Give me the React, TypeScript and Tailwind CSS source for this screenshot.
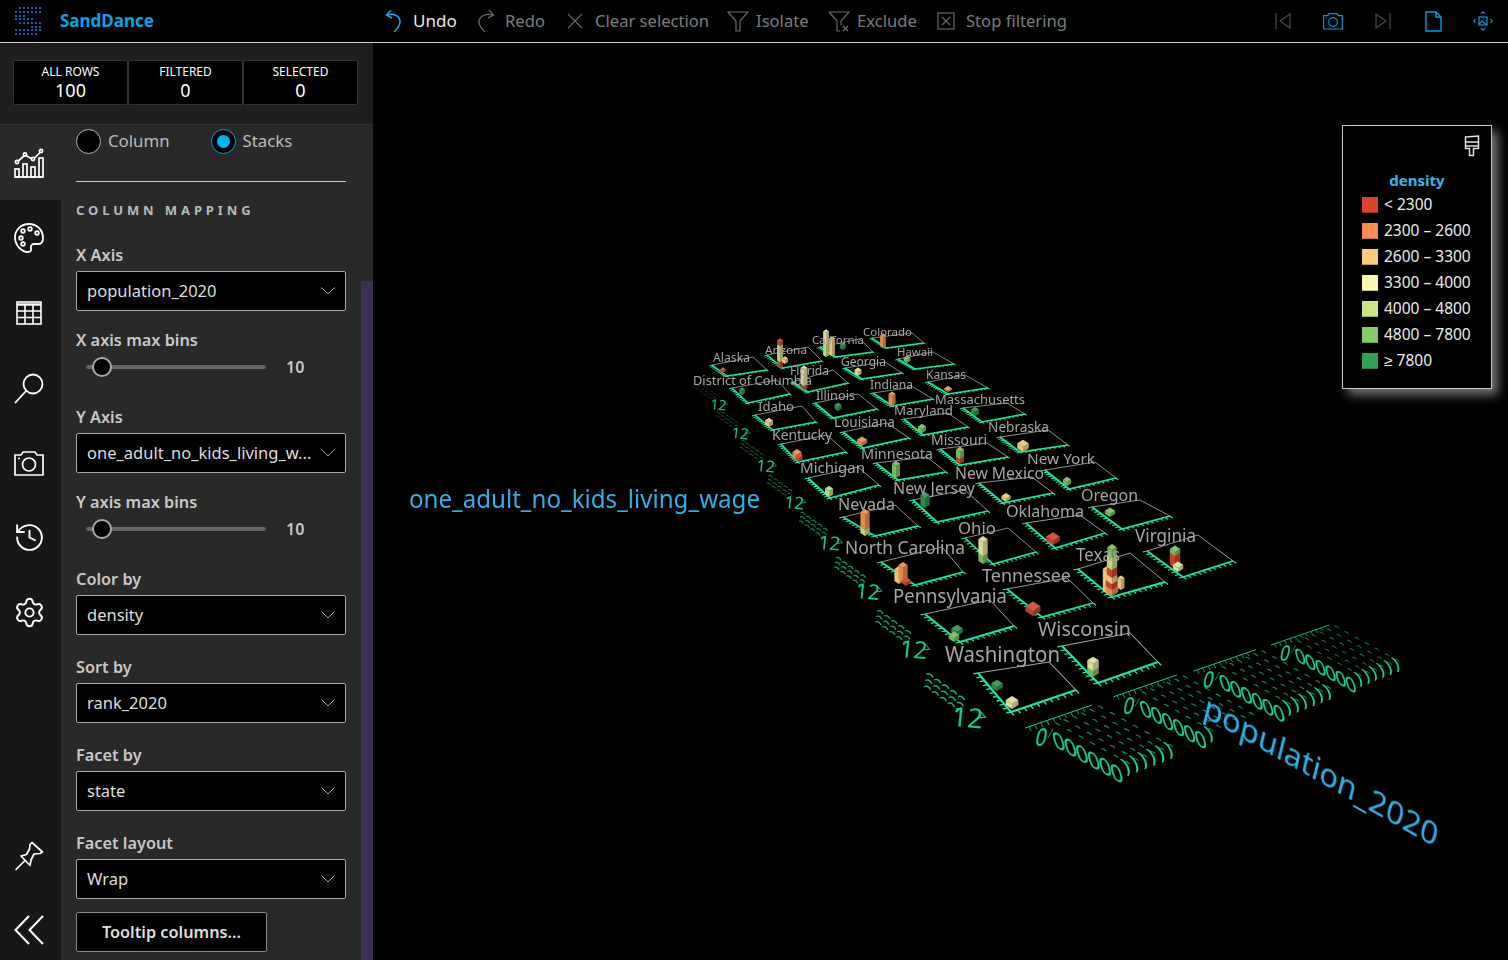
import { History, Settings } from "lucide-react";
import type { ReactNode } from "react";

type Pt = [number, number];

const red = "#c8402f";
const orange = "#e58a4e";
const tan = "#e6c47e";
const pale = "#ded99a";
const lime = "#bcd67e";
const green = "#79b85c";
const dark = "#2e8b4a";

// corners of each facet floor: left, front, right, top
const facets: [Pt, Pt, Pt, Pt][] = [
  [[712, 365], [727, 376], [767, 370], [753, 357]],
  [[767, 355], [783, 368], [822, 361], [808, 347]],
  [[820, 347], [836, 357], [873, 352], [860, 339]],
  [[872, 338], [887, 348], [924, 343], [912, 333]],
  [[732, 388], [748, 403], [790, 394], [777, 380]],
  [[793, 382], [808, 392], [848, 383], [833, 370]],
  [[845, 368], [862, 379], [902, 373], [885, 362]],
  [[898, 359], [915, 369], [954, 364], [933, 352]],
  [[755, 415], [773, 430], [816, 422], [802, 406]],
  [[815, 403], [833, 418], [877, 409], [858, 394]],
  [[873, 393], [892, 406], [933, 399], [913, 387]],
  [[928, 382], [948, 394], [988, 388], [965, 375]],
  [[781, 444], [798, 462], [846, 452], [827, 435]],
  [[843, 432], [863, 448], [909, 438], [887, 423]],
  [[904, 419], [923, 435], [968, 427], [948, 413]],
  [[963, 408], [982, 422], [1025, 414], [1007, 403]],
  [[808, 478], [830, 498], [879, 485], [858, 467]],
  [[876, 463], [898, 480], [946, 472], [927, 457]],
  [[940, 449], [960, 465], [1008, 457], [987, 443]],
  [[1000, 437], [1020, 452], [1068, 445], [1048, 430]],
  [[843, 517], [875, 536], [918, 526], [895, 505]],
  [[913, 500], [937, 522], [988, 511], [965, 490]],
  [[979, 483], [1003, 503], [1053, 493], [1032, 477]],
  [[1045, 470], [1069, 489], [1116, 478], [1095, 462]],
  [[881, 562], [915, 585], [963, 572], [942, 547]],
  [[965, 538], [993, 564], [1036, 552], [1008, 528]],
  [[1026, 523], [1055, 548], [1105, 533], [1080, 515]],
  [[1092, 507], [1122, 529], [1170, 516], [1140, 500]],
  [[925, 614], [960, 642], [1014, 626], [990, 600]],
  [[1007, 589], [1042, 617], [1093, 603], [1067, 578]],
  [[1078, 569], [1112, 597], [1165, 582], [1130, 553]],
  [[1147, 551], [1183, 577], [1233, 561], [1198, 535]],
  [[978, 673], [1011, 712], [1076, 690], [1049, 662]],
  [[1062, 646], [1098, 683], [1158, 662], [1130, 633]],
];

// text, left x, baseline y, width
const labels: [string, number, number, number][] = [
  ["Alaska", 713, 362, 37],
  ["Arizona", 765, 354, 42],
  ["California", 812, 344, 52],
  ["Colorado", 863, 336, 49],
  ["District of Columbia", 693, 385, 119],
  ["Florida", 790, 375, 39],
  ["Georgia", 841, 366, 45],
  ["Hawaii", 897, 356, 36],
  ["Idaho", 758, 411, 36],
  ["Illinois", 816, 400, 39],
  ["Indiana", 870, 389, 43],
  ["Kansas", 926, 379, 40],
  ["Kentucky", 772, 440, 60],
  ["Louisiana", 834, 427, 61],
  ["Maryland", 894, 415, 59],
  ["Massachusetts", 935, 404, 90],
  ["Michigan", 800, 473, 65],
  ["Minnesota", 861, 459, 72],
  ["Missouri", 931, 445, 56],
  ["Nebraska", 988, 432, 61],
  ["Nevada", 838, 510, 57],
  ["New Jersey", 893, 494, 82],
  ["New Mexico", 955, 479, 89],
  ["New York", 1027, 464, 68],
  ["North Carolina", 845, 554, 120],
  ["Ohio", 958, 534, 38],
  ["Oklahoma", 1006, 517, 78],
  ["Oregon", 1081, 501, 57],
  ["Pennsylvania", 893, 603, 114],
  ["Tennessee", 982, 582, 89],
  ["Texas", 1076, 561, 44],
  ["Virginia", 1135, 542, 61],
  ["Washington", 945, 662, 115],
  ["Wisconsin", 1038, 636, 93],
];

// center x, bottom y, width, height, colour; drawn in order
const bars: [number, number, number, number, string][] = [
  [723, 373, 5, 2, red],
  [780, 368, 5, 6, red],
  [780, 362, 5, 16, lime],
  [780, 346, 5, 4, red],
  [785, 364, 5, 4, tan],
  [826, 357, 5, 12, lime],
  [826, 345, 5, 12, pale],
  [832, 356, 5, 16, tan],
  [843, 350, 5, 4, dark],
  [883, 348, 5, 4, orange],
  [883, 344, 5, 7, orange],
  [742, 395, 5, 4, dark],
  [804, 390, 6, 4, red],
  [804, 386, 6, 16, pale],
  [858, 376, 6, 4, pale],
  [907, 363, 6, 3, green],
  [769, 427, 7, 4, tan],
  [838, 411, 6, 4, dark],
  [892, 406, 6, 10, orange],
  [948, 392, 7, 1, orange],
  [797, 460, 8, 5, orange],
  [799, 462, 6, 4, red],
  [862, 446, 9, 3, orange],
  [922, 433, 7, 4, green],
  [975, 416, 7, 4, dark],
  [829, 497, 7, 6, lime],
  [896, 478, 7, 12, green],
  [960, 464, 7, 5, red],
  [960, 459, 7, 7, green],
  [1023, 452, 10, 5, tan],
  [925, 508, 8, 10, dark],
  [1006, 502, 8, 3, tan],
  [1067, 486, 7, 4, green],
  [865, 536, 8, 6, lime],
  [865, 530, 8, 15, orange],
  [899, 584, 8, 12, tan],
  [903, 582, 8, 14, orange],
  [906, 586, 8, 3, red],
  [983, 564, 8, 8, green],
  [983, 556, 8, 14, pale],
  [1053, 545, 12, 4, red],
  [1110, 517, 9, 3, green],
  [957, 636, 10, 4, dark],
  [954, 642, 9, 4, green],
  [1033, 616, 13, 5, red],
  [1108, 594, 9, 22, tan],
  [1112, 596, 11, 6, orange],
  [1112, 590, 11, 6, red],
  [1112, 584, 9, 6, tan],
  [1112, 578, 9, 8, red],
  [1112, 570, 9, 12, lime],
  [1112, 558, 8, 8, green],
  [1121, 590, 6, 10, tan],
  [1175, 568, 9, 12, red],
  [1175, 556, 9, 4, green],
  [1178, 572, 9, 4, pale],
  [997, 691, 10, 4, dark],
  [1012, 709, 11, 5, pale],
  [1093, 677, 10, 6, green],
  [1093, 671, 10, 7, pale],
];

const twelves: [number, number, number][] = [
  [710, 409, 14],
  [731, 438, 15],
  [756, 471, 16],
  [784, 508, 17],
  [818, 549, 19],
  [855, 598, 21],
  [899, 657, 24],
  [951, 726, 27],
];

const zeroGroups: [number, number, number, number][] = [
  [0, 0, 1, 6],
  [88, -32, 0.95, 1],
  [168, -58, 0.93, 6],
  [245, -85, 0.87, 6],
];

const legend: [string, string, string][] = [
  ["#d9432f", "#a83325", "< 2300"],
  ["#f88c52", "#bf6b3e", "2300 – 2600"],
  ["#fdcb7c", "#c09a5d", "2600 – 3300"],
  ["#f9f6ad", "#c5c388", "3300 – 4000"],
  ["#cce681", "#9fb465", "4000 – 4800"],
  ["#85cb66", "#67a04f", "4800 – 7800"],
  ["#2fa352", "#247e3f", "≥ 7800"],
];

// logo dots: row y, then the x of each dot
const logoRows: [number, number[]][] = [
  [8, [20, 24, 28, 32, 36, 40]],
  [12, [16, 20, 24, 28, 32, 36, 40]],
  [16, [16, 20, 24]],
  [19, [16, 20, 24, 28, 32]],
  [23, [20, 24, 28, 32, 36, 40]],
  [27, [32, 36, 40]],
  [30, [16, 20, 24, 28, 32, 36, 40]],
  [34, [16, 20, 24, 28, 32, 36]],
];

function Prism({ b }: { b: (typeof bars)[number] }) {
  const [cx, by, w0, h, c] = b;
  const w = w0 * 1.15;
  const d = w * 0.32;
  const lx = cx - w / 2;
  const rx = cx + w / 2;
  return (
    <g>
      <polygon fill={c} points={`${lx},${by - d} ${cx},${by} ${cx},${by - h} ${lx},${by - h - d}`} />
      <polygon fill={c} points={`${rx},${by - d} ${cx},${by} ${cx},${by - h} ${rx},${by - h - d}`} />
      <polygon fill="#000" opacity="0.22" points={`${rx},${by - d} ${cx},${by} ${cx},${by - h} ${rx},${by - h - d}`} />
      <polygon fill={c} points={`${lx},${by - h - d} ${cx},${by - h} ${rx},${by - h - d} ${cx},${by - h - 2 * d}`} />
      <polygon fill="#fff" opacity="0.12" points={`${lx},${by - h - d} ${cx},${by - h} ${rx},${by - h - d} ${cx},${by - h - 2 * d}`} />
    </g>
  );
}

function Facet({ p }: { p: [Pt, Pt, Pt, Pt] }) {
  const [l, f, r, t] = p;
  const size = Math.hypot(r[0] - f[0], r[1] - f[1]);
  const sw = 0.7 + size / 48;
  const ticks: string[] = [];
  for (let i = 0; i <= 10; i++) {
    const k = i / 10;
    const ax = l[0] + (f[0] - l[0]) * k;
    const ay = l[1] + (f[1] - l[1]) * k;
    ticks.push(`M${ax} ${ay}l${(l[0] - r[0]) * 0.05} ${(l[1] - r[1]) * 0.02 + 1.2}`);
    const bx = f[0] + (r[0] - f[0]) * k;
    const by = f[1] + (r[1] - f[1]) * k;
    ticks.push(`M${bx} ${by}l${(f[0] - l[0]) * 0.09} ${(f[1] - l[1]) * 0.09}`);
  }
  return (
    <g fill="none">
      <path d={`M${l[0]} ${l[1]}L${t[0]} ${t[1]}L${r[0]} ${r[1]}`} stroke="#a8a8a8" strokeWidth={sw * 0.5} />
      <path d={`M${l[0]} ${l[1]}L${f[0]} ${f[1]}L${r[0]} ${r[1]}`} stroke="#18e8a0" strokeWidth={sw} />
      <path d={ticks.join("")} stroke="#18e8a0" strokeWidth={sw * 0.65} />
    </g>
  );
}

function LeftAxis({ item, index }: { item: (typeof twelves)[number]; index: number }) {
  const [x, y, s] = item;
  const arcs: string[] = [];
  const k = s / 24;
  for (let i = 0; i < 5; i++) {
    for (let j = 0; j < 3; j++) {
      const ax = x + (-22 - j + i * 7) * k;
      const ay = y + (-46 + j * 5.5 + i * 5) * k;
      arcs.push(`M${ax} ${ay}q${4 * k} ${-1.5 * k} ${6 * k} ${3 * k}`);
    }
  }
  return (
    <g>
      <path d={arcs.join("")} fill="none" stroke="#10c084" strokeWidth={0.6 + index * 0.12} opacity={0.45 + index * 0.07} />
      <text transform={`matrix(1,0.08,-0.1,1,${x},${y})`} fontSize={s} fill="#0fce8d" fontFamily="'Noto Sans', sans-serif">
        12
      </text>
      <path d={`M${x + s * 1.02} ${y - s * 0.62}l${s * 0.26} ${s * 0.3}l${-s * 0.26} ${s * 0.02}`} fill="none" stroke="#0fce8d" strokeWidth={0.4 + index * 0.1} />
    </g>
  );
}

function ZeroGroup({ g }: { g: (typeof zeroGroups)[number] }) {
  const [dx, dy, s, tail] = g;
  const font = "'Noto Sans', sans-serif";
  const dashes: string[] = [];
  for (let i = 0; i < 7; i++) {
    for (let j = 0; j < 6; j++) {
      const x = 23 + i * 11.6 + j * 8.6;
      const y = -21 + i * 6.4 - j * 3.4;
      dashes.push(`M${x} ${y}q3 0.2 5 2.6`);
    }
  }
  return (
    <g transform={`translate(${1032 + dx},${744 + dy}) scale(${s})`}>
      <path d="M-7 -16L60 -39" stroke="#14d898" strokeWidth="1" fill="none" />
      <path d="M-3 -17l2 4M3 -19l2 4M9 -21l2 4M15 -23l2 4M21 -25l2 3M27 -27l2 3M33 -29l2 3M39 -31l2 3M45 -33l2 3M51 -35l2 3" stroke="#14d898" strokeWidth="0.8" fill="none" />
      <path d={dashes.join("")} stroke="#0fb57e" strokeWidth="1.1" opacity="0.8" fill="none" />
      <path d="M16 -6L21 -15" stroke="#0fb57e" strokeWidth="0.8" fill="none" />
      <text transform="matrix(0.76,-0.05,-0.2,0.92,2,2)" fontSize="26" fill="#0fd08f" stroke="#0fd08f" strokeWidth="0.3" fontFamily={font}>
        0
      </text>
      {[0, 1, 2, 3, 4, 5].map((i) => (
        <text key={i} transform={`matrix(0.78,0.14,0.28,0.92,${23.6 + i * 11.6},${4.7 + i * 6.4})`} fontSize="26" fill="#0fd08f" stroke="#0fd08f" strokeWidth="0.3" fontFamily={font}>
          0
        </text>
      ))}
      {Array.from({ length: tail }, (_, i) => (
        <text key={i} transform={`matrix(0.95,-0.1,0.35,0.8,${93 + i * 8.6},${29 - i * 3.4})`} fontSize="24" fill="#0fd08f" fontFamily={font}>
          )
        </text>
      ))}
    </g>
  );
}

function Chart() {
  return (
    <svg viewBox="373 43 1135 917" className="block h-full w-full">
      <g className="blur-[0.25px]">
        {facets.map((p, i) => (
          <Facet key={i} p={p} />
        ))}
        {twelves.map((t, i) => (
          <LeftAxis key={i} item={t} index={i} />
        ))}
        {zeroGroups.map((g, i) => (
          <ZeroGroup key={i} g={g} />
        ))}
        {bars.map((b, i) => (
          <Prism key={i} b={b} />
        ))}
        {labels.map(([t, x, y, w]) => (
          <text
            key={t}
            x={x}
            y={y}
            textLength={w}
            lengthAdjust="spacingAndGlyphs"
            fontSize={11 + ((y - 336) / 326) * 10}
            fill="#a6a6a6"
            fontFamily="'Noto Sans', sans-serif"
          >
            {t}
          </text>
        ))}
      </g>
      <text x={409} y={508} textLength={351} lengthAdjust="spacingAndGlyphs" fontSize="25" fill="#2fb0e6" fontFamily="'Noto Sans', sans-serif">
        one_adult_no_kids_living_wage
      </text>
      <text transform="matrix(0.87,0.49,-0.24,0.97,1202,716)" textLength={268} lengthAdjust="spacingAndGlyphs" fontSize="31" fill="#2fb0e6" fontFamily="'Noto Sans', sans-serif">
        population_2020
      </text>
    </svg>
  );
}

function Logo() {
  return (
    <svg viewBox="14 5 30 32" className="h-8 w-[30px]">
      {logoRows.map(([y, xs]) =>
        xs.map((x) => <rect key={`${x}-${y}`} x={x - 1} y={y - 1} width="2" height="2" fill="#0a64b8" />),
      )}
    </svg>
  );
}

function ChartIcon() {
  return (
    <svg viewBox="0 0 30 30" className="h-[30px] w-[30px]" fill="none" stroke="#fff" strokeWidth="1.7">
      <path d="M1 29h28" />
      <rect x="1" y="21" width="4" height="8" />
      <rect x="9" y="16" width="4" height="13" />
      <rect x="17" y="19" width="4" height="10" />
      <rect x="25" y="10" width="4" height="19" />
      <path d="M3 14l8-7 8 4.500 8-8" />
      <circle cx="3" cy="14" r="1.600" fill="#292929" />
      <circle cx="11" cy="6.500" r="1.600" fill="#292929" />
      <circle cx="19" cy="11" r="1.600" fill="#292929" />
      <circle cx="27" cy="3" r="1.600" fill="#292929" />
    </svg>
  );
}

function PaletteIcon() {
  return (
    <svg viewBox="0 0 32 32" className="h-8 w-8" fill="none" stroke="#fff" strokeWidth="1.800">
      <path d="M16 2C8 2 2 8 2 15.500 2 23 8.500 30 15 30c2.500 0 3.500-1.500 3-3.500-.6-2.400.5-4.500 3-4.500h4.500c2.800 0 4.500-2.200 4.500-6C30 8 24 2 16 2z" />
      <circle cx="8" cy="16" r="1.800" />
      <circle cx="10" cy="9" r="1.800" />
      <circle cx="17" cy="7" r="1.800" />
      <circle cx="24" cy="11" r="1.800" />
      <circle cx="10" cy="22" r="1.800" />
    </svg>
  );
}

function TableIcon() {
  return (
    <svg viewBox="0 0 26 24" className="h-6 w-[26px]" fill="none" stroke="#fff" strokeWidth="1.6">
      <rect x="1" y="1" width="24" height="22" />
      <path d="M1 3.500h24" strokeWidth="2.400" />
      <path d="M1 10h24M1 16.500h24M9 3v20M17 3v20" />
    </svg>
  );
}

function SearchIcon() {
  return (
    <svg viewBox="0 0 32 32" className="h-8 w-8" fill="none" stroke="#fff" strokeWidth="1.800">
      <circle cx="20" cy="12" r="9.500" />
      <path d="M13 19L2 31" />
    </svg>
  );
}

function CameraIcon({ className, color }: { className: string; color: string }) {
  return (
    <svg viewBox="0 0 30 26" className={className} fill="none" stroke={color} strokeWidth="1.7">
      <path d="M1 5h6l2-3h12l2 3h6v20H1z" />
      <circle cx="15" cy="14.500" r="6.500" />
      <path d="M4 8.500h2" />
    </svg>
  );
}

function PinIcon() {
  return (
    <svg viewBox="0 0 30 30" className="h-[30px] w-[30px]" fill="none" stroke="#fff" strokeWidth="1.7" strokeLinejoin="round">
      <path d="M18 1.500L28.500 11l-2.500 1.500-6 .5-3 6-1 5.500L7 15l5.500-1.500 3-5.500L16 3.500z" />
      <path d="M11 19.500L1.500 29" />
    </svg>
  );
}

function CollapseIcon() {
  return (
    <svg viewBox="0 0 30 30" className="h-[30px] w-[30px]" fill="none" stroke="#fff" strokeWidth="2">
      <path d="M15 1L1.500 15 15 29M29 1L15.500 15 29 29" />
    </svg>
  );
}

function Chevron() {
  return (
    <svg viewBox="0 0 14 8" className="h-2 w-3.5 shrink-0" fill="none" stroke="#aaa" strokeWidth="1">
      <path d="M0.500 0.500L7 7l6.500-6.500" />
    </svg>
  );
}

function Field({ label, value, className }: { label: string; value: string; className: string }) {
  return (
    <div className={className}>
      <div className="mb-1 flex h-6 items-center text-[16.300px] font-semibold text-[#c8c8c8]">{label}</div>
      <div className="flex h-10 w-[270px] items-center justify-between rounded-[2px] border border-[#a8a8a8] bg-black pr-[10px] pl-[10px] text-[16.500px] text-[#dedede]">
        <span>{value}</span>
        <Chevron />
      </div>
    </div>
  );
}

function Slider({ label, className }: { label: string; className: string }) {
  return (
    <div className={className}>
      <div className="flex h-6 items-center text-[16.300px] font-semibold text-[#c8c8c8]">{label}</div>
      <div className="flex h-[30px] items-center pl-[10px]">
        <div className="relative h-1 w-[180px] rounded-full bg-[#666]">
          <div className="absolute top-[-8px] left-[6px] h-5 w-5 rounded-full border-2 border-[#aaa] bg-black" />
        </div>
        <span className="ml-[20px] text-[16px] font-semibold text-[#c8c8c8]">10</span>
      </div>
    </div>
  );
}

function Stat({ label, value }: { label: string; value: string }) {
  return (
    <div className="flex h-[45px] w-[115px] flex-col items-center justify-center rounded-[2px] border border-[#333] bg-black text-white">
      <div className="text-[12px] leading-[15px]">{label}</div>
      <div className="text-[18px] leading-[22px]">{value}</div>
    </div>
  );
}

const gray = "#6a6a6a";

function ToolButton({ className, icon, text, on }: { className: string; icon: ReactNode; text: string; on?: boolean }) {
  return (
    <div className={`flex h-full items-center whitespace-nowrap ${className}`}>
      <div className="flex w-[29px] items-center">{icon}</div>
      <span className={on ? "text-[17px] text-[#e8e8e8]" : "text-[16.600px] text-[#7d7d7d]"}>{text}</span>
    </div>
  );
}

function TopBar() {
  return (
    <div className="flex h-[43px] shrink-0 items-center border-b border-[#cfcfcf] bg-black">
      <div className="flex w-[384px] shrink-0 items-center pl-[14px]">
        <Logo />
        <span className="ml-[16px] text-[17px] font-bold text-[#00a6e6]">SandDance</span>
      </div>
      <ToolButton
        className="w-[92px]"
        on
        text="Undo"
        icon={
          <svg viewBox="0 0 20 24" className="h-6 w-5" fill="none" stroke="#19a7e4" strokeWidth="1.500">
            <path d="M7 1L2.500 6l5.500 3M3 6c7-2 13 1 13 7 0 4-3 7-6 10" />
          </svg>
        }
      />
      <ToolButton
        className="w-[90px]"
        text="Redo"
        icon={
          <svg viewBox="0 0 20 24" className="h-6 w-5" fill="none" stroke={gray} strokeWidth="1.300">
            <path d="M13 1l4.500 5-5.500 3M17 6C10 4 3 7 3 13c0 4 3 7 6 10" />
          </svg>
        }
      />
      <ToolButton
        className="w-[161px]"
        text="Clear selection"
        icon={
          <svg viewBox="0 0 18 18" className="h-[18px] w-[18px]" fill="none" stroke={gray} strokeWidth="1.200">
            <path d="M2 2l14 14M16 2L2 16" />
          </svg>
        }
      />
      <ToolButton
        className="w-[101px]"
        text="Isolate"
        icon={
          <svg viewBox="0 0 22 22" className="h-[22px] w-[22px]" fill="none" stroke={gray} strokeWidth="1.200">
            <path d="M1 2h20l-8 9v10H9V11z" />
          </svg>
        }
      />
      <ToolButton
        className="w-[109px]"
        text="Exclude"
        icon={
          <svg viewBox="0 0 22 22" className="h-[22px] w-[22px]" fill="none" stroke={gray} strokeWidth="1.200">
            <path d="M1 2h20l-8 9v4M9 21V11L1 2M9 21h3M15 16l5 5M20 16l-5 5" />
          </svg>
        }
      />
      <ToolButton
        className="w-[130px]"
        text="Stop filtering"
        icon={
          <svg viewBox="0 0 18 18" className="h-[18px] w-[18px]" fill="none" stroke={gray} strokeWidth="1.200">
            <rect x="1" y="1" width="16" height="16" />
            <path d="M5 5l8 8M13 5l-8 8" />
          </svg>
        }
      />
      <div className="ml-auto flex items-center">
        <div className="flex w-[50px] justify-center">
          <svg viewBox="0 0 16 16" className="h-4 w-4" fill="none" stroke="#4a4a4a" strokeWidth="1.200">
            <path d="M1 0v16M15 1L5 8l10 7z" />
          </svg>
        </div>
        <div className="flex w-[50px] justify-center">
          <CameraIcon className="h-[18px] w-5" color="#0d9bdc" />
        </div>
        <div className="flex w-[50px] justify-center">
          <svg viewBox="0 0 16 16" className="h-4 w-4" fill="none" stroke="#4a4a4a" strokeWidth="1.200">
            <path d="M15 0v16M1 1l10 7-10 7z" />
          </svg>
        </div>
        <div className="flex w-[50px] justify-center">
          <svg viewBox="0 0 17 21" className="h-[21px] w-[17px]" fill="none" stroke="#0d9bdc" strokeWidth="1.400">
            <path d="M1 1h10l5 5v14H1zM11 1v5h5" />
          </svg>
        </div>
        <div className="flex w-[50px] justify-center">
          <svg viewBox="0 0 20 20" className="h-5 w-5" fill="none" stroke="#0d9bdc" strokeWidth="1.200">
            <rect x="6" y="6" width="8" height="8" />
            <path d="M6 13l3-3 5 4M2.500 8L1 10l1.500 2M17.500 8L19 10l-1.500 2M8 2.500L10 1l2 1.500M8 17.500L10 19l2-1.500" />
          </svg>
        </div>
      </div>
    </div>
  );
}

function Rail() {
  const itemClass = "flex h-[75px] items-center justify-center pr-[3px]";
  const lucide = "h-[33px] w-[33px]";
  return (
    <div className="flex w-[61px] shrink-0 flex-col bg-[#171717] text-white">
      <div className={`${itemClass} bg-[#292929]`}>
        <ChartIcon />
      </div>
      <div className={itemClass}>
        <PaletteIcon />
      </div>
      <div className={itemClass}>
        <TableIcon />
      </div>
      <div className={itemClass}>
        <SearchIcon />
      </div>
      <div className={itemClass}>
        <CameraIcon className="h-[26px] w-[30px]" color="#fff" />
      </div>
      <div className={itemClass}>
        <History className={lucide} strokeWidth={1.4} />
      </div>
      <div className={itemClass}>
        <Settings className={lucide} strokeWidth={1.4} />
      </div>
      <div className="mt-auto mb-[7px] flex h-[74px] items-center justify-center pr-[3px]">
        <PinIcon />
      </div>
      <div className="flex h-[60px] items-center justify-center pr-[3px]">
        <CollapseIcon />
      </div>
    </div>
  );
}

function Panel() {
  return (
    <div className="relative flex-1 overflow-hidden bg-[#292929] pl-[15px]">
      <div className="absolute top-[156px] right-0 bottom-0 w-3 bg-[#3b2e58]" />
      <div className="flex h-8 items-center text-[16.800px] text-[#bdbdbd]">
        <div className="h-[25px] w-[25px] rounded-full border border-[#b5b5b5] bg-black" />
        <span className="ml-[7px]">Column</span>
        <div className="ml-[41px] flex h-[25px] w-[25px] items-center justify-center rounded-full border border-[#00a6e6] bg-black">
          <div className="h-[13px] w-[13px] rounded-full bg-[#00b4f0]" />
        </div>
        <span className="ml-[7px]">Stacks</span>
      </div>
      <div className="mt-[24px] h-px w-[270px] bg-[#cfcfcf]" />
      <div className="mt-[20px] flex h-[18px] items-center text-[13px] font-bold tracking-[0.3em] text-[#b8b8b8]">COLUMN MAPPING</div>
      <Field className="mt-[23px]" label="X Axis" value="population_2020" />
      <Slider className="mt-[17px]" label="X axis max bins" />
      <Field className="mt-[23px]" label="Y Axis" value="one_adult_no_kids_living_w..." />
      <Slider className="mt-[17px]" label="Y axis max bins" />
      <Field className="mt-[23px]" label="Color by" value="density" />
      <Field className="mt-[20px]" label="Sort by" value="rank_2020" />
      <Field className="mt-[20px]" label="Facet by" value="state" />
      <Field className="mt-[20px]" label="Facet layout" value="Wrap" />
      <div className="mt-[13px] flex h-10 w-[191px] items-center justify-center rounded-[2px] border border-[#8a8a8a] bg-black text-[16.300px] font-semibold text-[#dedede]">
        Tooltip columns...
      </div>
    </div>
  );
}

function Legend() {
  return (
    <div className="absolute top-[82px] right-[16px] h-[264px] w-[150px] border border-[#c8c8c8] bg-black px-[19px] shadow-[6px_6px_10px_rgba(255,255,255,0.45)]">
      <div className="-mr-[8px] flex h-[40px] items-start justify-end pt-[9px]">
        <svg viewBox="0 0 16 22" className="h-[22px] w-4" fill="none" stroke="#e0e0e0" strokeWidth="1.500">
          <path d="M1.500 2l13-1v10h-13zM1.500 7h13M1.500 11v2.500h4v7h4v-7h5V11" />
        </svg>
      </div>
      <div className="mt-[2px] flex h-[24px] items-center justify-center text-[15px] font-bold text-[#39b6e8]">density</div>
      <div className="flex flex-col">
        {legend.map(([c, b, t]) => (
          <div key={t} className="flex h-[26px] items-center gap-[6px]">
            <div className="h-4 w-4 shrink-0 border-b" style={{ backgroundColor: c, borderColor: b }} />
            <span className="text-[15.500px] text-[#ececec]">{t}</span>
          </div>
        ))}
      </div>
    </div>
  );
}

export default function App() {
  return (
    <div className="flex h-[960px] w-[1508px] flex-col overflow-hidden bg-black font-['Noto_Sans',sans-serif]">
      <TopBar />
      <div className="flex min-h-0 flex-1">
        <div className="flex w-[373px] shrink-0 flex-col">
          <div className="flex h-[82px] shrink-0 items-start border-b border-[#333] bg-[#1e1e1e] pt-[17px] pl-[13px]">
            <Stat label="ALL ROWS" value="100" />
            <Stat label="FILTERED" value="0" />
            <Stat label="SELECTED" value="0" />
          </div>
          <div className="flex min-h-0 flex-1">
            <Rail />
            <Panel />
          </div>
        </div>
        <div className="relative min-w-0 flex-1">
          <Chart />
          <Legend />
        </div>
      </div>
    </div>
  );
}
